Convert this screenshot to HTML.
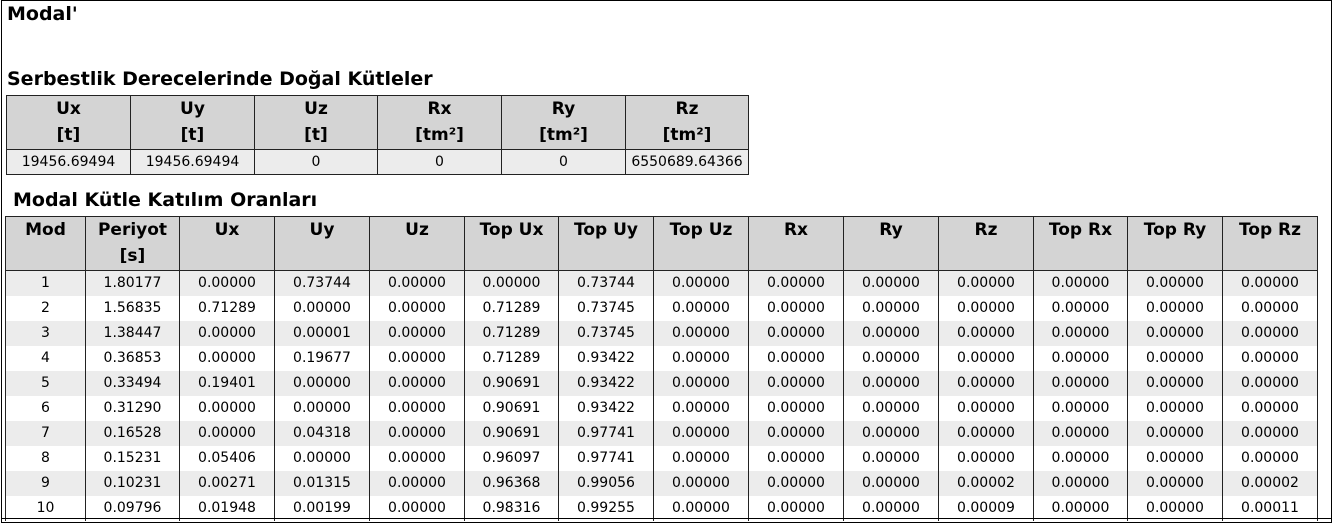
<!DOCTYPE html>
<html><head><meta charset="utf-8"><style>
html,body{margin:0;padding:0;background:#fff;}
body{width:1333px;height:525px;position:relative;overflow:hidden;font-family:"DejaVu Sans","Liberation Sans",sans-serif;color:#000;}
.frame{position:absolute;left:1px;top:0;width:1331px;height:523px;border:1px solid #000;box-sizing:border-box;}
h1{position:absolute;left:7px;top:3px;margin:0;font-size:19px;font-weight:bold;}
.t{position:absolute;margin:0;font-size:19px;font-weight:bold;white-space:nowrap;}
table{position:absolute;border-collapse:collapse;table-layout:fixed;}
td,th{border:1px solid #222;padding:0;text-align:center;overflow:hidden;white-space:nowrap;}
th{background:#d4d4d4;font-size:17px;font-weight:bold;line-height:26px;vertical-align:top;height:53px;}
td{font-size:14px;height:24px;line-height:24px;}
tr.g td{background:#ececec;}
#t2 td{border-top:none;border-bottom:none;height:25px;line-height:25px;}
</style></head><body>
<div class="frame"></div>
<h1>Modal'</h1>
<div class="t" style="left:7px;top:68px;">Serbestlik Derecelerinde Doğal Kütleler</div>
<table style="left:6px;top:95px;width:743px;">
<colgroup><col style="width:124px"><col style="width:124px"><col style="width:123px"><col style="width:124px"><col style="width:124px"><col style="width:123px"></colgroup>
<tr><th>Ux<br>[t]</th><th>Uy<br>[t]</th><th>Uz<br>[t]</th><th>Rx<br>[tm²]</th><th>Ry<br>[tm²]</th><th>Rz<br>[tm²]</th></tr>
<tr class="g"><td>19456.69494</td><td>19456.69494</td><td>0</td><td>0</td><td>0</td><td>6550689.64366</td></tr>
</table>
<div class="t" style="left:13px;top:189px;">Modal Kütle Katılım Oranları</div>
<table id="t2" style="left:5px;top:216px;width:1313px;">
<colgroup><col style="width:80px"><col style="width:94px"><col style="width:95px"><col style="width:95px"><col style="width:95px"><col style="width:94px"><col style="width:95px"><col style="width:95px"><col style="width:95px"><col style="width:95px"><col style="width:95px"><col style="width:94px"><col style="width:95px"><col style="width:95px"></colgroup>
<tr><th>Mod</th><th>Periyot<br>[s]</th><th>Ux</th><th>Uy</th><th>Uz</th><th>Top Ux</th><th>Top Uy</th><th>Top Uz</th><th>Rx</th><th>Ry</th><th>Rz</th><th>Top Rx</th><th>Top Ry</th><th>Top Rz</th></tr>
<tr class="g"><td>1</td><td>1.80177</td><td>0.00000</td><td>0.73744</td><td>0.00000</td><td>0.00000</td><td>0.73744</td><td>0.00000</td><td>0.00000</td><td>0.00000</td><td>0.00000</td><td>0.00000</td><td>0.00000</td><td>0.00000</td></tr>
<tr><td>2</td><td>1.56835</td><td>0.71289</td><td>0.00000</td><td>0.00000</td><td>0.71289</td><td>0.73745</td><td>0.00000</td><td>0.00000</td><td>0.00000</td><td>0.00000</td><td>0.00000</td><td>0.00000</td><td>0.00000</td></tr>
<tr class="g"><td>3</td><td>1.38447</td><td>0.00000</td><td>0.00001</td><td>0.00000</td><td>0.71289</td><td>0.73745</td><td>0.00000</td><td>0.00000</td><td>0.00000</td><td>0.00000</td><td>0.00000</td><td>0.00000</td><td>0.00000</td></tr>
<tr><td>4</td><td>0.36853</td><td>0.00000</td><td>0.19677</td><td>0.00000</td><td>0.71289</td><td>0.93422</td><td>0.00000</td><td>0.00000</td><td>0.00000</td><td>0.00000</td><td>0.00000</td><td>0.00000</td><td>0.00000</td></tr>
<tr class="g"><td>5</td><td>0.33494</td><td>0.19401</td><td>0.00000</td><td>0.00000</td><td>0.90691</td><td>0.93422</td><td>0.00000</td><td>0.00000</td><td>0.00000</td><td>0.00000</td><td>0.00000</td><td>0.00000</td><td>0.00000</td></tr>
<tr><td>6</td><td>0.31290</td><td>0.00000</td><td>0.00000</td><td>0.00000</td><td>0.90691</td><td>0.93422</td><td>0.00000</td><td>0.00000</td><td>0.00000</td><td>0.00000</td><td>0.00000</td><td>0.00000</td><td>0.00000</td></tr>
<tr class="g"><td>7</td><td>0.16528</td><td>0.00000</td><td>0.04318</td><td>0.00000</td><td>0.90691</td><td>0.97741</td><td>0.00000</td><td>0.00000</td><td>0.00000</td><td>0.00000</td><td>0.00000</td><td>0.00000</td><td>0.00000</td></tr>
<tr><td>8</td><td>0.15231</td><td>0.05406</td><td>0.00000</td><td>0.00000</td><td>0.96097</td><td>0.97741</td><td>0.00000</td><td>0.00000</td><td>0.00000</td><td>0.00000</td><td>0.00000</td><td>0.00000</td><td>0.00000</td></tr>
<tr class="g"><td>9</td><td>0.10231</td><td>0.00271</td><td>0.01315</td><td>0.00000</td><td>0.96368</td><td>0.99056</td><td>0.00000</td><td>0.00000</td><td>0.00000</td><td>0.00002</td><td>0.00000</td><td>0.00000</td><td>0.00002</td></tr>
<tr><td>10</td><td>0.09796</td><td>0.01948</td><td>0.00199</td><td>0.00000</td><td>0.98316</td><td>0.99255</td><td>0.00000</td><td>0.00000</td><td>0.00000</td><td>0.00009</td><td>0.00000</td><td>0.00000</td><td>0.00011</td></tr>
</table>
<div style="position:absolute;left:2px;top:518px;width:1329px;height:1px;background:#000;"></div>
</body></html>
